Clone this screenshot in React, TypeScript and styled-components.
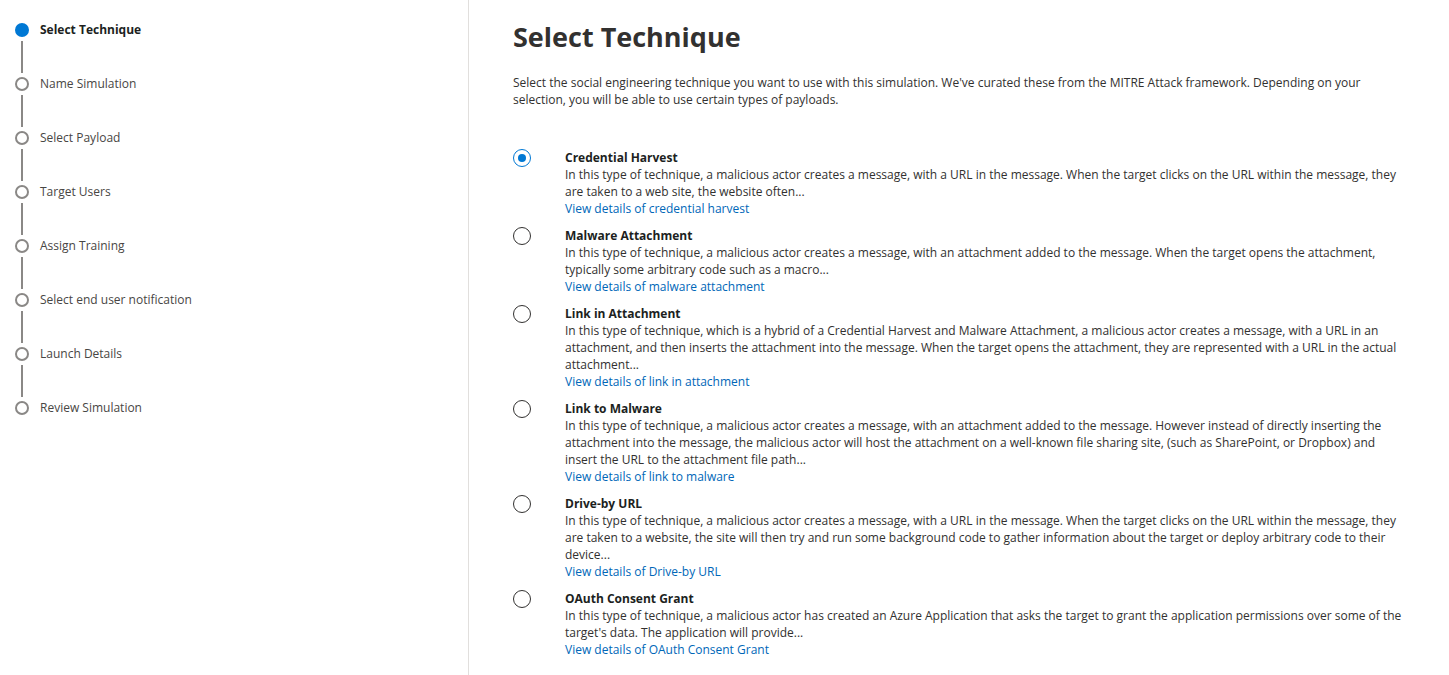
import React, { useState } from 'react';
import styled, { createGlobalStyle } from 'styled-components';

const GlobalStyle = createGlobalStyle`
  html, body {
    margin: 0;
    padding: 0;
    background: #ffffff;
    font-family: "Segoe UI", "Open Sans", "Noto Sans", sans-serif;
    color: #323130;
  }
`;

const Page = styled.div`
  display: flex;
  width: 100%;
  height: 675px;
  overflow: hidden;
`;

const Nav = styled.nav`
  width: 469px;
  flex-shrink: 0;
  border-right: 1px solid #e1dfdd;
  padding: 23px 0 0 15px;
  box-sizing: border-box;
`;

const Step = styled.div`
  display: flex;
  align-items: flex-start;
  gap: 11px;
`;

const Track = styled.div`
  display: flex;
  flex-direction: column;
  align-items: center;
  width: 14px;
`;

const Dot = styled.div<{ $active?: boolean }>`
  width: 14px;
  height: 14px;
  box-sizing: border-box;
  border-radius: 50%;
  border: ${p => (p.$active ? 'none' : '2px solid #8a8886')};
  background: ${p => (p.$active ? '#0078d4' : '#fff')};
`;

const Connector = styled.div`
  width: 2px;
  height: 32px;
  margin: 4px 0 4px;
  background: #8a8886;
`;

const StepLabel = styled.span<{ $active?: boolean }>`
  font-size: 12px;
  line-height: 16px;
  margin-top: -1px;
  font-weight: ${p => (p.$active ? 700 : 400)};
  color: ${p => (p.$active ? '#201f1e' : '#484644')};
`;

const Main = styled.main`
  flex: 1;
  padding: 18px 40px 0 44px;
`;

const Title = styled.h1`
  margin: 0;
  font-size: 27px;
  line-height: 38px;
  font-weight: 700;
  color: #323130;
`;

const Intro = styled.p`
  margin: 18px 0 0;
  font-size: 12px;
  line-height: 17px;
  color: #323130;
`;

const Options = styled.div`
  display: flex;
  flex-direction: column;
  gap: 10px;
  margin-top: 41px;
`;

const Option = styled.label`
  display: flex;
  align-items: flex-start;
  cursor: pointer;
`;

const RadioCell = styled.div`
  width: 52px;
  flex-shrink: 0;
`;

const Radio = styled.div<{ $checked?: boolean }>`
  width: 18px;
  height: 18px;
  box-sizing: border-box;
  border-radius: 50%;
  border: 1px solid ${p => (p.$checked ? '#0078d4' : '#323130')};
  display: flex;
  align-items: center;
  justify-content: center;
  &::after {
    content: '';
    width: 8px;
    height: 8px;
    border-radius: 50%;
    background: #0078d4;
    display: ${p => (p.$checked ? 'block' : 'none')};
  }
`;

const OptionBody = styled.div`
  font-size: 12px;
  line-height: 17px;
  max-width: 845px;
`;

const OptionTitle = styled.div`
  font-weight: 700;
  color: #201f1e;
`;

const OptionText = styled.div`
  color: #323130;
`;

const DetailLink = styled.a`
  color: #0067b8;
  text-decoration: none;
  cursor: pointer;
`;

const steps = [
  'Select Technique',
  'Name Simulation',
  'Select Payload',
  'Target Users',
  'Assign Training',
  'Select end user notification',
  'Launch Details',
  'Review Simulation',
];

const techniques = [
  {
    title: 'Credential Harvest',
    text: 'In this type of technique, a malicious actor creates a message, with a URL in the message. When the target clicks on the URL within the message, they are taken to a web site, the website often...',
    link: 'View details of credential harvest',
  },
  {
    title: 'Malware Attachment',
    text: 'In this type of technique, a malicious actor creates a message, with an attachment added to the message. When the target opens the attachment, typically some arbitrary code such as a macro...',
    link: 'View details of malware attachment',
  },
  {
    title: 'Link in Attachment',
    text: 'In this type of technique, which is a hybrid of a Credential Harvest and Malware Attachment, a malicious actor creates a message, with a URL in an attachment, and then inserts the attachment into the message. When the target opens the attachment, they are represented with a URL in the actual attachment...',
    link: 'View details of link in attachment',
  },
  {
    title: 'Link to Malware',
    text: 'In this type of technique, a malicious actor creates a message, with an attachment added to the message. However instead of directly inserting the attachment into the message, the malicious actor will host the attachment on a well-known file sharing site, (such as SharePoint, or Dropbox) and insert the URL to the attachment file path...',
    link: 'View details of link to malware',
  },
  {
    title: 'Drive-by URL',
    text: 'In this type of technique, a malicious actor creates a message, with a URL in the message. When the target clicks on the URL within the message, they are taken to a website, the site will then try and run some background code to gather information about the target or deploy arbitrary code to their device...',
    link: 'View details of Drive-by URL',
  },
  {
    title: 'OAuth Consent Grant',
    text: "In this type of technique, a malicious actor has created an Azure Application that asks the target to grant the application permissions over some of the target's data. The application will provide...",
    link: 'View details of OAuth Consent Grant',
  },
];

export default function App() {
  const [selected, setSelected] = useState(0);
  return (
    <>
      <GlobalStyle />
      <Page>
        <Nav>
          {steps.map((s, i) => (
            <Step key={s}>
              <Track>
                <Dot $active={i === 0} />
                {i < steps.length - 1 && <Connector />}
              </Track>
              <StepLabel $active={i === 0}>{s}</StepLabel>
            </Step>
          ))}
        </Nav>
        <Main>
          <Title>Select Technique</Title>
          <Intro>
            Select the social engineering technique you want to use with this simulation. We've curated these from the MITRE Attack framework. Depending on your selection, you will be able to use certain types of payloads.
          </Intro>
          <Options>
            {techniques.map((t, i) => (
              <Option key={t.title} onClick={() => setSelected(i)}>
                <RadioCell>
                  <Radio $checked={selected === i} />
                </RadioCell>
                <OptionBody>
                  <OptionTitle>{t.title}</OptionTitle>
                  <OptionText>{t.text}</OptionText>
                  <DetailLink>{t.link}</DetailLink>
                </OptionBody>
              </Option>
            ))}
          </Options>
        </Main>
      </Page>
    </>
  );
}
